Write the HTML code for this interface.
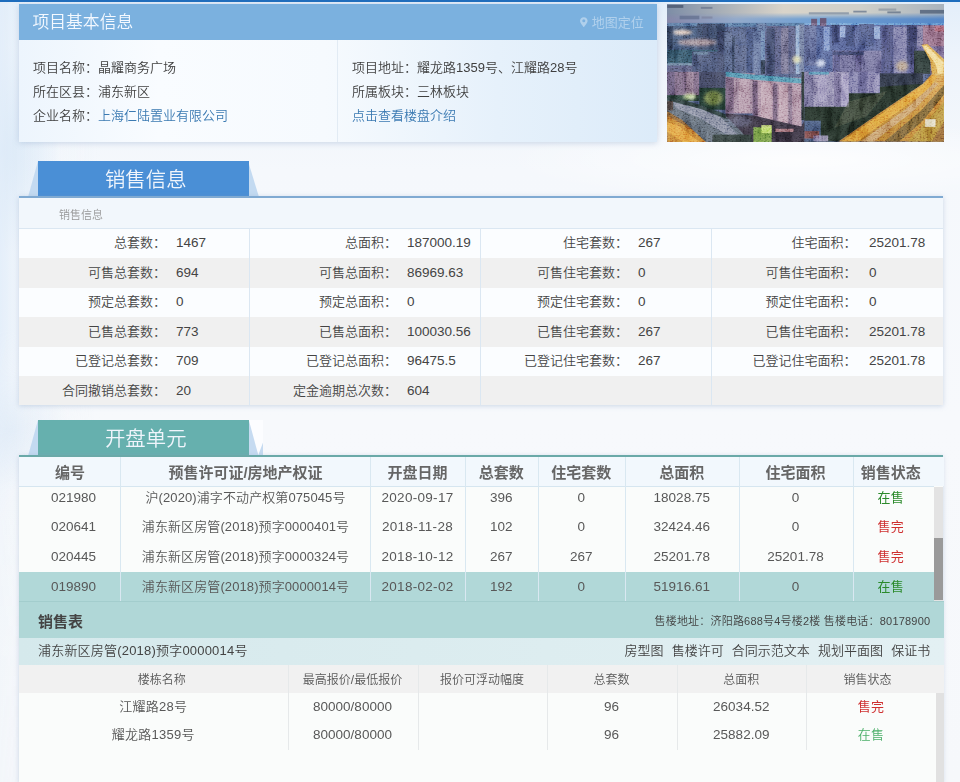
<!DOCTYPE html>
<html lang="zh-CN">
<head>
<meta charset="utf-8">
<title>项目基本信息</title>
<style>
*{box-sizing:border-box;margin:0;padding:0}
html,body{width:960px;height:782px;overflow:hidden}
body{position:relative;font-family:"Liberation Sans","Noto Sans CJK SC",sans-serif;font-size:13px;color:#3f3f3f;font-weight:350;
background:#f3f7fb;}
.abs{position:absolute}
#bg{left:0;top:0;width:960px;height:782px;
background:
radial-gradient(ellipse 60px 105px at 0px 150px,rgba(200,222,243,1),rgba(200,222,243,0) 100%),
radial-gradient(ellipse 60px 60px at 10px 430px,rgba(226,236,247,1),rgba(226,236,247,0) 100%),
radial-gradient(ellipse 300px 40px at 800px 160px,rgba(255,255,255,.8),rgba(255,255,255,0) 100%),
linear-gradient(180deg,#e3eefa 0,#eef4fb 60px,#f5f8fc 170px,#f7f9fc 420px,#f6f8fb 782px);}
#bgl{left:0;top:0;width:100px;height:782px;background:linear-gradient(90deg,rgba(226,237,249,.9) 0,rgba(240,246,252,.4) 25px,rgba(246,249,252,0) 100px);-webkit-mask-image:linear-gradient(180deg,#000 0,#000 330px,rgba(0,0,0,.25) 520px,rgba(0,0,0,.15) 782px);mask-image:linear-gradient(180deg,#000 0,#000 330px,rgba(0,0,0,.25) 520px,rgba(0,0,0,.15) 782px)}
#topbar{left:0;top:0;width:960px;height:2px;background:#1e6dbd}
/* ---------- basic info ---------- */
#info{left:19px;top:3.8px;width:638px;height:138px;box-shadow:0 1px 6px rgba(120,150,190,.35);
background:linear-gradient(90deg,#edf5fd 0,#f9fcff 22%,#f6fafe 48%,#e6f1fb 75%,#dcebf9 100%)}
#info .hd{left:0;top:0;width:638px;height:36.6px;background:#7bb1df}
#info .hd .t{left:13.5px;top:0.8px;line-height:36px;font-size:16.8px;color:#f4f9ff}
#info .hd .map{right:13.2px;top:0.5px;line-height:38px;font-size:13px;color:#b0d0ec;font-weight:400}
#info .sep{left:318px;top:36px;width:1px;height:102px;background:#e2ebf4}
.ln{line-height:24px;height:24px;white-space:nowrap;color:#3f3f3f}
.lk{color:#3b7ab2}
/* ---------- tabs ---------- */
.tab{left:38px;width:210.5px;height:35px;color:#f0f5fc;font-size:20.4px;text-align:center;line-height:35px;padding-left:5px;padding-top:1.7px;overflow:hidden}
/* ---------- sale info ---------- */
#sale{left:19px;top:195.8px;width:924.3px;height:209.4px;overflow:hidden;background:#f2f7fc;border-top:2px solid #80aad2;box-shadow:0 1px 5px rgba(120,150,190,.35)}
#sale .sub{left:40px;top:9px;font-size:11px;color:#969696;line-height:16px}
.r{left:0;width:925px;height:29.5px}
.r.w{background:#fbfdff}
.r.g{background:#f0f0f0}
.vl{top:30.8px;width:1px;height:177px;background:#dbe7f2}
.lb{margin-top:-.5px;width:147px;text-align:right;white-space:nowrap;line-height:29.6px;height:29.6px;color:#444}
.vv{margin-top:-.5px;font-size:13.5px;white-space:nowrap;line-height:29.6px;height:29.6px;color:#444}
/* ---------- units ---------- */
#unit{left:19px;top:454.8px;width:924.3px;height:328px;background:#fafcfb;border-top:2px solid #6aa9a8;box-shadow:0 1px 5px rgba(120,150,190,.35)}
.th{top:0;height:29.5px;line-height:32px;text-align:center;font-weight:bold;font-size:15px;color:#666;white-space:nowrap}
.td{height:29.7px;line-height:29.7px;text-align:center;white-space:nowrap;color:#585858;font-size:13px;letter-spacing:.25px}
.n{font-size:13.5px;letter-spacing:0}
.green{color:#2b8a2b;font-weight:400}.green2{color:#4caf6a}.red{color:#cf3030;font-weight:400}
</style>
</head>
<body>
<div id="bg" class="abs"></div>
<div id="bgl" class="abs"></div>
<div id="topbar" class="abs"></div>

<!-- basic info -->
<div id="info" class="abs">
  <div class="hd abs">
    <div class="t abs">项目基本信息</div>
    <div class="map abs"><svg width="7.6" height="10.4" viewBox="0 0 9 12" style="vertical-align:0px;margin-right:3.8px"><path d="M4.5 0C2 0 0 2 0 4.4 0 7.2 4.5 12 4.5 12S9 7.2 9 4.4C9 2 7 0 4.5 0zm0 6.2a1.8 1.8 0 1 1 0-3.6 1.8 1.8 0 0 1 0 3.6z" fill="#b0d0ec"/></svg>地图定位</div>
  </div>
  <div class="sep abs"></div>
  <div class="ln abs" style="left:14px;top:51.8px">项目名称：晶耀商务广场</div>
  <div class="ln abs" style="left:14px;top:76.2px">所在区县：浦东新区</div>
  <div class="ln abs" style="left:14px;top:100.5px">企业名称：<span class="lk">上海仁陆置业有限公司</span></div>
  <div class="ln abs" style="left:333px;top:51.8px">项目地址：耀龙路1359号、江耀路28号</div>
  <div class="ln abs" style="left:333px;top:76.2px">所属板块：三林板块</div>
  <div class="ln abs lk" style="left:333px;top:100.5px">点击查看楼盘介绍</div>
</div>

<!-- photo -->
<div id="photo" class="abs" style="left:666.7px;top:4.2px;width:277.3px;height:138.1px;background:#4a5878;overflow:hidden"><svg width="277.3" height="138.1" viewBox="0 0 277 138" preserveAspectRatio="none" style="display:block"><defs>
<linearGradient id="sk1" x1="0" x2="1" y1="0" y2="0"><stop offset="0" stop-color="#7d8da6"/><stop offset=".2" stop-color="#a9b0b8"/><stop offset=".42" stop-color="#d9d4ca"/><stop offset=".7" stop-color="#cfd0ca"/><stop offset="1" stop-color="#a9b3bd"/></linearGradient>
<linearGradient id="sk2" x1="0" x2="1" y1="0" y2="0"><stop offset="0" stop-color="#8587a8"/><stop offset=".25" stop-color="#93aacb"/><stop offset=".5" stop-color="#74a2d3"/><stop offset="1" stop-color="#5688c8"/></linearGradient>
<linearGradient id="skv" x1="0" x2="0" y1="0" y2="1"><stop offset="0" stop-color="#fff" stop-opacity="0"/><stop offset=".4" stop-color="#fff" stop-opacity="0"/><stop offset=".68" stop-color="#fff" stop-opacity="1"/></linearGradient>
<mask id="skm"><rect width="277" height="22" fill="url(#skv)"/></mask>
<linearGradient id="road" x1="0" x2="1" y1="1" y2="0"><stop offset="0" stop-color="#a56c28"/><stop offset=".5" stop-color="#bf8436"/><stop offset="1" stop-color="#d6a052"/></linearGradient>
<linearGradient id="mass" x1="0" x2="1" y1="0" y2="0"><stop offset="0" stop-color="#4f5f92"/><stop offset=".7" stop-color="#565e90"/><stop offset="1" stop-color="#74648a"/></linearGradient>
<filter id="noise" x="0" y="0" width="100%" height="100%"><feTurbulence type="fractalNoise" baseFrequency=".55 .7" numOctaves="2" seed="3"/><feColorMatrix type="matrix" values="1.8 1.8 0 0 -1.32  1.8 1.8 0 0 -1.32  1.8 1.8 0 0 -1.32  0 0 0 0 1"/></filter>
<filter id="noise2" x="0" y="0" width="100%" height="100%"><feTurbulence type="fractalNoise" baseFrequency=".12 .05" numOctaves="2" seed="11"/><feColorMatrix type="matrix" values="2 2 0 0 -1.55  2 2 0 0 -1.55  2 2 0 0 -1.55  0 0 0 0 1"/></filter>
<filter id="bl" x="-5%" y="-5%" width="110%" height="110%"><feGaussianBlur stdDeviation=".6"/></filter>
<filter id="glow" x="-30%" y="-30%" width="160%" height="160%"><feGaussianBlur stdDeviation="1.4"/></filter>
</defs><g filter="url(#bl)"><rect x="0" y="0" width="277" height="138" fill="#4f5c80"/><rect x="0" y="0" width="277" height="22" fill="url(#sk1)"/><rect x="0" y="0" width="277" height="22" fill="url(#sk2)" mask="url(#skm)"/><rect x="0.2" y="1.0" width="16.1" height="2.9" fill="#4a566e" opacity="0.8"/><rect x="33.8" y="2.9" width="11.6" height="1.9" fill="#66728a" opacity="0.7"/><rect x="12.6" y="11.7" width="19.7" height="3.6" fill="#5f6c8c" opacity="0.7"/><rect x="34.5" y="12.4" width="10.9" height="2.2" fill="#7a7f9a" opacity="0.6"/><rect x="141.7" y="8.2" width="40.0" height="2.2" fill="#6f8098" opacity="0.6"/><rect x="186.1" y="6.7" width="13.3" height="1.8" fill="#5f6f88" opacity="0.7"/><rect x="211.3" y="4.5" width="17.7" height="2.2" fill="#7f8a98" opacity="0.6"/><rect x="220.1" y="7.4" width="13.4" height="1.9" fill="#5a6a80" opacity="0.7"/><rect x="252.7" y="5.9" width="24.4" height="3.7" fill="#4f5f78" opacity="0.8"/><rect x="0.2" y="18.9" width="137.1" height="4.0" fill="#4f6f9a" opacity="0.9"/><rect x="0.2" y="21.9" width="51.1" height="24.8" fill="#3f5273"/><rect x="0.2" y="22.6" width="5.9" height="21.9" fill="#2c3852"/><rect x="30.1" y="19.7" width="27.7" height="27.0" fill="#3d4b68"/><rect x="35.9" y="19.7" width="6.6" height="21.9" fill="#313d5a"/><rect x="0.2" y="45.9" width="51.1" height="13.9" fill="#355468"/><rect x="0.2" y="59.1" width="29.2" height="10.7" fill="#55597a"/><rect x="0.2" y="59.1" width="29.2" height="2.3" fill="#6f90a8" opacity="0.7"/><rect x="25.0" y="47.4" width="27.7" height="22.4" fill="#4b5676"/><rect x="26.5" y="48.1" width="14.6" height="2.5" fill="#6f90a8" opacity="0.5"/><rect x="50.5" y="27.0" width="14.6" height="42.8" fill="#3f4a68"/><rect x="57.4" y="28.4" width="7.7" height="41.4" fill="#5d6a8c" opacity="0.8"/><rect x="65.1" y="32.8" width="2.9" height="37.0" fill="#39445f"/><rect x="67.3" y="41.6" width="13.1" height="28.2" fill="#586485"/><rect x="79.7" y="25.5" width="13.9" height="44.3" fill="#44527a"/><rect x="86.3" y="27.0" width="7.3" height="42.8" fill="#6c7ba2" opacity="0.8"/><rect x="93.6" y="21.1" width="5.8" height="35.0" fill="#6a82ac"/><rect x="93.6" y="56.1" width="5.8" height="13.7" fill="#2f3b50"/><rect x="97.9" y="21.9" width="30.7" height="47.9" fill="#585d80"/><rect x="99.4" y="23.3" width="8.7" height="46.5" fill="#3f4666" opacity="0.9"/><rect x="114.0" y="24.1" width="7.3" height="45.7" fill="#837c98" opacity="0.6"/><rect x="89.2" y="19.7" width="10.2" height="7.3" fill="#5d6f98"/><rect x="128.6" y="21.1" width="4.3" height="48.7" fill="#8ea8cc"/><rect x="132.2" y="20.4" width="5.1" height="49.4" fill="#6a7699"/><rect x="137" y="21" width="140" height="49" fill="url(#mass)"/><rect x="144.0" y="14.8" width="5.9" height="7.4" fill="#6a5a78"/><rect x="152.8" y="14.1" width="6.4" height="8.1" fill="#6a5a78"/><rect x="137.3" y="21.5" width="11.8" height="39.9" fill="#606a96"/><rect x="137.3" y="22.2" width="4.4" height="39.2" fill="#565f88"/><rect x="164.7" y="20.7" width="7.4" height="18.5" fill="#3f4870" opacity="0.9"/><rect x="178.7" y="21.5" width="8.9" height="20.7" fill="#414b74" opacity="0.9"/><rect x="192.0" y="20.0" width="14.8" height="22.2" fill="#4a5580" opacity="0.9"/><rect x="214.2" y="21.5" width="11.9" height="48.3" fill="#4a4f78" opacity="0.9"/><rect x="239.4" y="21.5" width="10.3" height="38.4" fill="#454a70" opacity="0.9"/><rect x="156.5" y="22.9" width="5.9" height="23.7" fill="#8aa4d8" opacity="0.75"/><rect x="172.8" y="22.2" width="5.2" height="11.1" fill="#a8c0e8" opacity="0.75"/><rect x="206.8" y="22.2" width="5.9" height="12.6" fill="#a0bce6" opacity="0.75"/><rect x="226.1" y="22.9" width="13.3" height="46.9" fill="#8583ab" opacity="0.75"/><rect x="249.7" y="22.2" width="5.9" height="20.0" fill="#8a84a8" opacity="0.75"/><rect x="165.4" y="46.6" width="48.8" height="23.2" fill="#6e6c96"/><rect x="165.4" y="47.4" width="31.1" height="3.7" fill="#3a4468" opacity="0.9"/><rect x="166.9" y="51.1" width="5.9" height="18.7" fill="#4f4f7a" opacity="0.8"/><rect x="187.6" y="51.1" width="6.7" height="18.7" fill="#55527c" opacity="0.8"/><rect x="255.6" y="21.5" width="21.5" height="20.7" fill="#967088"/><rect x="267.5" y="22.2" width="9.6" height="5.2" fill="#b05866" opacity="0.6"/><rect x="246.8" y="46.6" width="16.2" height="23.2" fill="#2f3a38"/><rect x="0.2" y="67.8" width="32.1" height="24.1" fill="#75627c"/><rect x="0.2" y="67.8" width="7.3" height="24.1" fill="#5f5472" opacity="0.8"/><rect x="19.2" y="67.8" width="7.3" height="23.3" fill="#9a8296" opacity="0.7"/><rect x="32.3" y="67.8" width="26.3" height="16.8" fill="#3d435c"/><rect x="32.3" y="83.8" width="26.3" height="21.9" fill="#1b3029"/><rect x="0.2" y="91.1" width="32.1" height="5.9" fill="#263c36"/><rect x="58.6" y="69.3" width="29.1" height="40.1" fill="#9c8298"/><rect x="87.7" y="73.6" width="46.7" height="48.9" fill="#a68a9e"/><polygon points="58.6,67.8 87.7,70.7 134.4,74.4 134.4,79.5 87.7,75.8 58.6,72.5" fill="#4595b0" opacity="0.85"/><rect x="58.6" y="73.6" width="8.0" height="35.8" fill="#685670" opacity="0.85"/><rect x="85.5" y="76.6" width="5.1" height="39.3" fill="#5f4d68" opacity="0.85"/><rect x="105.9" y="79.5" width="4.4" height="42.3" fill="#65526e" opacity="0.8"/><rect x="121.3" y="80.2" width="3.6" height="41.6" fill="#6a5872" opacity="0.7"/><rect x="71.7" y="75.1" width="10.9" height="33.5" fill="#c0a4b0" opacity="0.6"/><rect x="93.6" y="78.7" width="10.9" height="40.1" fill="#c6a9b4" opacity="0.55"/><rect x="111.8" y="80.9" width="8.7" height="40.1" fill="#c8acb6" opacity="0.55"/><rect x="126.4" y="81.7" width="7.7" height="40.1" fill="#bca0b0" opacity="0.5"/><rect x="134.4" y="67.8" width="2.9" height="48.1" fill="#2a3436"/><polygon points="58.6,109.4 87.7,111.6 134.4,122.5 137.3,115.9 137.3,139.8 84.8,139.8 58.6,115.9" fill="#38303f"/><rect x="108.1" y="124.7" width="18.3" height="3.2" fill="#c08a90" opacity="0.8"/><polygon points="0.2,92.6 33.8,101.3 58.6,111.6 73.1,126.1 84.8,139.8 41.1,139.8 14.8,115.9 0.2,107.2" fill="#5c6672"/><polygon points="6.1,97.7 33.8,104.3 55.6,114.5 73.1,133.4 58.6,130.5 33.8,114.5 9.0,104.3" fill="#9a9cb8" opacity="0.6"/><polygon points="0.2,91.9 33.8,100.6 58.6,110.1 58.6,114.5 33.8,105.0 0.2,96.2" fill="#22352f" opacity="0.8"/><polygon points="0.2,107.2 14.8,115.9 41.1,139.8 0.2,139.8" fill="#c48334"/><polygon points="0.2,118.1 10.4,121.0 35.2,139.8 19.2,139.8 0.2,127.6" fill="#e6a946" opacity="0.8"/><polygon points="0.2,107.2 14.8,115.9 26.5,126.1 0.2,111.6" fill="#6f5238" opacity="0.7"/><rect x="0.2" y="97.0" width="5.9" height="9.4" fill="#4a3a34" opacity="0.8"/><rect x="45.4" y="130.5" width="39.4" height="9.3" fill="#323d3a"/><rect x="86.3" y="123.2" width="18.2" height="15.3" fill="#7fae48" opacity="0.85"/><rect x="94.3" y="121.0" width="10.2" height="8.1" fill="#d4ec80" opacity="0.8"/><rect x="137.3" y="67.8" width="44.4" height="35.2" fill="#8d87ab"/><rect x="137.3" y="67.8" width="8.9" height="35.2" fill="#6c6890" opacity="0.8"/><rect x="141.7" y="67.8" width="20.0" height="2.7" fill="#4590b0" opacity="0.8"/><rect x="166.9" y="69.3" width="6.6" height="33.3" fill="#625d86" opacity="0.7"/><rect x="174.3" y="69.3" width="7.1" height="33.3" fill="#b4acd0" opacity="0.6"/><rect x="150.6" y="72.2" width="8.9" height="25.2" fill="#a9a2c6" opacity="0.5"/><rect x="181.7" y="67.8" width="31.0" height="21.9" fill="#7a78a4"/><rect x="190.6" y="67.8" width="8.8" height="21.4" fill="#5d5a88" opacity="0.7"/><rect x="200.9" y="69.3" width="11.1" height="19.2" fill="#9a94bc" opacity="0.6"/><rect x="212.7" y="69.3" width="42.9" height="13.3" fill="#2f3445"/><polygon points="137.3,102.6 181.7,102.6 181.7,89.2 212.7,89.2 212.7,82.6 255.6,79.6 264.5,69.3 255.6,79.6 171.3,137.3 137.3,137.3" fill="#222f28"/><polygon points="181.7,97.4 220.1,87.0 199.4,112.2 166.9,124.0" fill="#48503e" opacity="0.6"/><rect x="137.3" y="116.6" width="16.3" height="20.7" fill="#46597a"/><rect x="137.3" y="127.0" width="14.8" height="7.4" fill="#8a4a44" opacity="0.8"/><rect x="146.2" y="131.4" width="14.8" height="5.9" fill="#9a90b8" opacity="0.8"/><polygon points="171.3,137.3 214.2,107.7 255.6,79.6 264.5,70.0 277.1,67.8 277.1,137.3" fill="url(#road)"/><polygon points="264.5,70.0 277.1,61.9 277.1,72.2" fill="#dcb868"/><polygon points="174.3,137.3 255.6,81.1 266.0,70.8 270.4,72.2 260.1,85.6 190.6,137.3" fill="#e4a83c" opacity="0.75"/><polygon points="217.2,137.3 254.2,106.3 277.1,80.4 277.1,90.0 255.6,116.6 232.0,137.3" fill="#5f5230" opacity="0.75"/><polygon points="193.5,137.3 240.9,103.3 267.5,78.2 271.2,79.6 246.8,106.3 206.8,137.3" fill="#c8a47a" opacity="0.75"/><polygon points="240.9,137.3 277.1,97.4 277.1,137.3" fill="#b0903c" opacity="0.8"/><polygon points="264.5,137.3 277.1,116.6 277.1,137.3" fill="#8a5a38" opacity="0.7"/><rect x="257.9" y="115.1" width="10.3" height="7.7" fill="#ecece2" opacity="0.85"/><polygon points="254.2,40.7 260.1,40.0 277.1,55.5 277.1,69.8 264.5,69.8 263.0,57.0" fill="#d8a850"/><polygon points="255.6,42.2 259.3,41.4 276.4,58.5 276.4,69.8 270.4,69.8 268.2,59.9" fill="#f8e6a8" opacity="0.8"/></g><g filter="url(#glow)"><ellipse cx="15.6" cy="28.4" rx="9.4" ry="2.2" fill="#ffe4d0" opacity="0.95"/><ellipse cx="30.1" cy="38.3" rx="19.7" ry="3.3" fill="#e0b8b0" opacity="0.6"/><ellipse cx="129.6" cy="55.5" rx="4.0" ry="3.7" fill="#f0e8b0" opacity="0.8"/><ellipse cx="153.6" cy="59.2" rx="4.5" ry="3.7" fill="#e8f0ff" opacity="0.8"/><ellipse cx="22.9" cy="92.6" rx="6.5" ry="2.9" fill="#e0f0b8" opacity="0.9"/><ellipse cx="46.2" cy="94.0" rx="9.4" ry="7.2" fill="#b8c060" opacity="0.5"/><ellipse cx="72.4" cy="117.4" rx="12.4" ry="5.8" fill="#8088a8" opacity="0.4"/><ellipse cx="234.9" cy="62.1" rx="6.0" ry="5.1" fill="#e8c070" opacity="0.5"/></g><rect x="0" y="19" width="277" height="119" filter="url(#noise)" opacity=".22" style="mix-blend-mode:overlay"/><rect x="0" y="19" width="277" height="119" filter="url(#noise2)" opacity=".3" style="mix-blend-mode:soft-light"/></svg></div>

<!-- sale tab -->
<svg class="abs" style="left:26px;top:161px" width="240" height="36"><polygon points="2,36 12,0 12,36" fill="#c3daf1"/><polygon points="222,0 233,36 222,36" fill="#c3daf1"/></svg>
<div class="tab abs" style="top:161px;background:#4a8fd6">销售信息</div>

<div id="sale" class="abs">
  <div class="sub abs">销售信息</div>
  <div class="abs" style="left:0;top:29.8px;width:925px;height:1px;background:#dbe7f2"></div>
  <div class="r w abs" style="top:30.8px"></div>
  <div class="r g abs" style="top:60.3px"></div>
  <div class="r w abs" style="top:89.8px"></div>
  <div class="r g abs" style="top:119.3px"></div>
  <div class="r w abs" style="top:148.8px"></div>
  <div class="r g abs" style="top:178.3px"></div>
  <div class="vl abs" style="left:230.3px"></div>
  <div class="vl abs" style="left:461px"></div>
  <div class="vl abs" style="left:692.3px"></div>
  <!-- col 1 -->
  <div class="lb abs" style="left:0;top:30.8px">总套数：</div><div class="vv abs" style="left:157px;top:30.8px">1467</div>
  <div class="lb abs" style="left:0;top:60.3px">可售总套数：</div><div class="vv abs" style="left:157px;top:60.3px">694</div>
  <div class="lb abs" style="left:0;top:89.8px">预定总套数：</div><div class="vv abs" style="left:157px;top:89.8px">0</div>
  <div class="lb abs" style="left:0;top:119.3px">已售总套数：</div><div class="vv abs" style="left:157px;top:119.3px">773</div>
  <div class="lb abs" style="left:0;top:148.8px">已登记总套数：</div><div class="vv abs" style="left:157px;top:148.8px">709</div>
  <div class="lb abs" style="left:0;top:178.3px">合同撤销总套数：</div><div class="vv abs" style="left:157px;top:178.3px">20</div>
  <!-- col 2 -->
  <div class="lb abs" style="left:231px;top:30.8px">总面积：</div><div class="vv abs" style="left:388px;top:30.8px">187000.19</div>
  <div class="lb abs" style="left:231px;top:60.3px">可售总面积：</div><div class="vv abs" style="left:388px;top:60.3px">86969.63</div>
  <div class="lb abs" style="left:231px;top:89.8px">预定总面积：</div><div class="vv abs" style="left:388px;top:89.8px">0</div>
  <div class="lb abs" style="left:231px;top:119.3px">已售总面积：</div><div class="vv abs" style="left:388px;top:119.3px">100030.56</div>
  <div class="lb abs" style="left:231px;top:148.8px">已登记总面积：</div><div class="vv abs" style="left:388px;top:148.8px">96475.5</div>
  <div class="lb abs" style="left:231px;top:178.3px">定金逾期总次数：</div><div class="vv abs" style="left:388px;top:178.3px">604</div>
  <!-- col 3 -->
  <div class="lb abs" style="left:462px;top:30.8px">住宅套数：</div><div class="vv abs" style="left:619px;top:30.8px">267</div>
  <div class="lb abs" style="left:462px;top:60.3px">可售住宅套数：</div><div class="vv abs" style="left:619px;top:60.3px">0</div>
  <div class="lb abs" style="left:462px;top:89.8px">预定住宅套数：</div><div class="vv abs" style="left:619px;top:89.8px">0</div>
  <div class="lb abs" style="left:462px;top:119.3px">已售住宅套数：</div><div class="vv abs" style="left:619px;top:119.3px">267</div>
  <div class="lb abs" style="left:462px;top:148.8px">已登记住宅套数：</div><div class="vv abs" style="left:619px;top:148.8px">267</div>
  <!-- col 4 -->
  <div class="lb abs" style="left:690.5px;top:30.8px">住宅面积：</div><div class="vv abs" style="left:850px;top:30.8px">25201.78</div>
  <div class="lb abs" style="left:690.5px;top:60.3px">可售住宅面积：</div><div class="vv abs" style="left:850px;top:60.3px">0</div>
  <div class="lb abs" style="left:690.5px;top:89.8px">预定住宅面积：</div><div class="vv abs" style="left:850px;top:89.8px">0</div>
  <div class="lb abs" style="left:690.5px;top:119.3px">已售住宅面积：</div><div class="vv abs" style="left:850px;top:119.3px">25201.78</div>
  <div class="lb abs" style="left:690.5px;top:148.8px">已登记住宅面积：</div><div class="vv abs" style="left:850px;top:148.8px">25201.78</div>
</div>

<!-- unit tab -->
<svg class="abs" style="left:26px;top:420px" width="240" height="36"><polygon points="2,36 12,0 12,36" fill="#c3daf1"/><polygon points="222,0 237,0 237,36 222,36" fill="#fcfdff"/><polygon points="222.8,0 232.3,35 222.8,35" fill="#c6dbf1"/><polygon points="232.3,35 237,35 237,22.5" fill="#c6dbf1"/></svg>
<div class="tab abs" style="top:420px;background:#66b0ae">开盘单元</div>

<div id="unit" class="abs">
  <div class="abs" style="left:0;top:0;width:925px;height:29.5px;background:#f2f8fd"></div>
  <div class="abs" style="left:0;top:29.5px;width:915px;height:1px;background:#d6e6f0"></div>
  <div class="abs" style="left:0;top:114.9px;width:915.3px;height:29.8px;background:#b1d8d8"></div>
  <div class="th abs" style="left:0px;width:102px">编号</div>
  <div class="th abs" style="left:102px;width:249px">预售许可证/房地产权证</div>
  <div class="th abs" style="left:351px;width:95px">开盘日期</div>
  <div class="th abs" style="left:446px;width:72.5px">总套数</div>
  <div class="th abs" style="left:518.5px;width:87.5px">住宅套数</div>
  <div class="th abs" style="left:606px;width:113.5px">总面积</div>
  <div class="th abs" style="left:719.5px;width:114.0px">住宅面积</div>
  <div class="th abs" style="left:833.5px;width:76.5px">销售状态</div>
  <div class="abs" style="left:101.3px;top:0;width:1px;height:144.7px;background:#d9e8f1"></div>
  <div class="abs" style="left:351px;top:0;width:1px;height:144.7px;background:#d9e8f1"></div>
  <div class="abs" style="left:446px;top:0;width:1px;height:144.7px;background:#d9e8f1"></div>
  <div class="abs" style="left:518.5px;top:0;width:1px;height:144.7px;background:#d9e8f1"></div>
  <div class="abs" style="left:606px;top:0;width:1px;height:144.7px;background:#d9e8f1"></div>
  <div class="abs" style="left:719.5px;top:0;width:1px;height:144.7px;background:#d9e8f1"></div>
  <div class="abs" style="left:833.5px;top:0;width:1px;height:144.7px;background:#d9e8f1"></div>
  <div class="td abs n" style="left:0px;top:26.4px;width:102px;padding-left:7px">021980</div>
  <div class="td abs" style="left:102px;top:26.4px;width:249px;letter-spacing:.1px">沪(2020)浦字不动产权第075045号</div>
  <div class="td abs n" style="left:351px;top:26.4px;width:95px;letter-spacing:.3px">2020-09-17</div>
  <div class="td abs n" style="left:446px;top:26.4px;width:72.5px">396</div>
  <div class="td abs n" style="left:518.5px;top:26.4px;width:87.5px">0</div>
  <div class="td abs n" style="left:606px;top:26.4px;width:113.5px">18028.75</div>
  <div class="td abs n" style="left:719.5px;top:26.4px;width:114.0px">0</div>
  <div class="td abs green" style="left:833.5px;top:26.4px;width:76.5px">在售</div>
  <div class="td abs n" style="left:0px;top:55.5px;width:102px;padding-left:7px">020641</div>
  <div class="td abs" style="left:102px;top:55.5px;width:249px;letter-spacing:.1px">浦东新区房管(2018)预字0000401号</div>
  <div class="td abs n" style="left:351px;top:55.5px;width:95px;letter-spacing:.3px">2018-11-28</div>
  <div class="td abs n" style="left:446px;top:55.5px;width:72.5px">102</div>
  <div class="td abs n" style="left:518.5px;top:55.5px;width:87.5px">0</div>
  <div class="td abs n" style="left:606px;top:55.5px;width:113.5px">32424.46</div>
  <div class="td abs n" style="left:719.5px;top:55.5px;width:114.0px">0</div>
  <div class="td abs red" style="left:833.5px;top:55.5px;width:76.5px">售完</div>
  <div class="td abs n" style="left:0px;top:85.5px;width:102px;padding-left:7px">020445</div>
  <div class="td abs" style="left:102px;top:85.5px;width:249px;letter-spacing:.1px">浦东新区房管(2018)预字0000324号</div>
  <div class="td abs n" style="left:351px;top:85.5px;width:95px;letter-spacing:.3px">2018-10-12</div>
  <div class="td abs n" style="left:446px;top:85.5px;width:72.5px">267</div>
  <div class="td abs n" style="left:518.5px;top:85.5px;width:87.5px">267</div>
  <div class="td abs n" style="left:606px;top:85.5px;width:113.5px">25201.78</div>
  <div class="td abs n" style="left:719.5px;top:85.5px;width:114.0px">25201.78</div>
  <div class="td abs red" style="left:833.5px;top:85.5px;width:76.5px">售完</div>
  <div class="td abs n" style="left:0px;top:115.3px;width:102px;padding-left:7px">019890</div>
  <div class="td abs" style="left:102px;top:115.3px;width:249px;letter-spacing:.1px">浦东新区房管(2018)预字0000014号</div>
  <div class="td abs n" style="left:351px;top:115.3px;width:95px;letter-spacing:.3px">2018-02-02</div>
  <div class="td abs n" style="left:446px;top:115.3px;width:72.5px">192</div>
  <div class="td abs n" style="left:518.5px;top:115.3px;width:87.5px">0</div>
  <div class="td abs n" style="left:606px;top:115.3px;width:113.5px">51916.61</div>
  <div class="td abs n" style="left:719.5px;top:115.3px;width:114.0px">0</div>
  <div class="td abs green" style="left:833.5px;top:115.3px;width:76.5px">在售</div>
  <div class="abs" style="left:915.3px;top:30px;width:9px;height:114.7px;background:#e3e3e3"></div>
  <div class="abs" style="left:915.3px;top:81px;width:9px;height:62.5px;background:#9a9a9a"></div>
  <div class="abs" style="left:0;top:144.7px;width:925px;height:36.2px;background:#b0d7d7;border-top:1.6px solid #a3cdcd"></div>
  <div class="abs" style="left:19px;top:147px;line-height:35px;font-size:15px;font-weight:bold;color:#444">销售表</div>
  <div class="abs" style="right:13px;top:147.2px;line-height:35px;font-size:11px;letter-spacing:.2px;color:#444;white-space:nowrap">售楼地址：济阳路688号4号楼2楼 售楼电话：80178900</div>
  <div class="abs" style="left:0;top:180.9px;width:925px;height:27.3px;background:linear-gradient(90deg,#d5e9ec,#e3f0f3)"></div>
  <div class="abs" style="left:19px;top:180.6px;line-height:28px;font-size:13px;letter-spacing:.2px;color:#444;white-space:nowrap">浦东新区房管(2018)预字0000014号</div>
  <div class="abs" style="right:13px;top:180.6px;line-height:28px;font-size:13px;color:#444;white-space:nowrap;word-spacing:4.6px">房型图 售楼许可 合同示范文本 规划平面图 保证书</div>
  <div class="abs" style="left:0;top:208.2px;width:925px;height:27.7px;background:#f1f1f1"></div>
  <div class="abs" style="left:0px;top:208.5px;width:268.5px;padding-left:17px;height:27.5px;line-height:30.5px;text-align:center;font-size:12px;color:#585858;white-space:nowrap">楼栋名称</div>
  <div class="abs" style="left:268.5px;top:208.5px;width:130.0px;height:27.5px;line-height:30.5px;text-align:center;font-size:12px;color:#585858;white-space:nowrap">最高报价/最低报价</div>
  <div class="abs" style="left:398.5px;top:208.5px;width:129.0px;height:27.5px;line-height:30.5px;text-align:center;font-size:12px;color:#585858;white-space:nowrap">报价可浮动幅度</div>
  <div class="abs" style="left:527.5px;top:208.5px;width:130.0px;height:27.5px;line-height:30.5px;text-align:center;font-size:12px;color:#585858;white-space:nowrap">总套数</div>
  <div class="abs" style="left:657.5px;top:208.5px;width:129.5px;height:27.5px;line-height:30.5px;text-align:center;font-size:12px;color:#585858;white-space:nowrap">总面积</div>
  <div class="abs" style="left:787px;top:208.5px;width:123px;height:27.5px;line-height:30.5px;text-align:center;font-size:12px;color:#585858;white-space:nowrap">销售状态</div>
  <div class="abs" style="left:268.5px;top:208.5px;width:1px;height:84.5px;background:#e6e9ea"></div>
  <div class="abs" style="left:398.5px;top:208.5px;width:1px;height:84.5px;background:#e6e9ea"></div>
  <div class="abs" style="left:527.5px;top:208.5px;width:1px;height:84.5px;background:#e6e9ea"></div>
  <div class="abs" style="left:657.5px;top:208.5px;width:1px;height:84.5px;background:#e6e9ea"></div>
  <div class="abs" style="left:787px;top:208.5px;width:1px;height:84.5px;background:#e6e9ea"></div>
  <div class="td abs" style="left:0px;top:236px;width:268.5px;height:27.5px;line-height:27.5px">江耀路28号</div>
  <div class="td abs n" style="left:268.5px;top:236px;width:130.0px;height:27.5px;line-height:27.5px">80000/80000</div>
  <div class="td abs n" style="left:527.5px;top:236px;width:130.0px;height:27.5px;line-height:27.5px">96</div>
  <div class="td abs n" style="left:657.5px;top:236px;width:129.5px;height:27.5px;line-height:27.5px">26034.52</div>
  <div class="td abs red" style="left:787px;top:236px;width:130px;height:27.5px;line-height:27.5px">售完</div>
  <div class="td abs" style="left:0px;top:264px;width:268.5px;height:27.5px;line-height:27.5px">耀龙路1359号</div>
  <div class="td abs n" style="left:268.5px;top:264px;width:130.0px;height:27.5px;line-height:27.5px">80000/80000</div>
  <div class="td abs n" style="left:527.5px;top:264px;width:130.0px;height:27.5px;line-height:27.5px">96</div>
  <div class="td abs n" style="left:657.5px;top:264px;width:129.5px;height:27.5px;line-height:27.5px">25882.09</div>
  <div class="td abs green2" style="left:787px;top:264px;width:130px;height:27.5px;line-height:27.5px">在售</div>
  <div class="abs" style="left:917px;top:236px;width:7.6px;height:90px;background:#e1e1e1"></div>
</div>
</body>
</html>
